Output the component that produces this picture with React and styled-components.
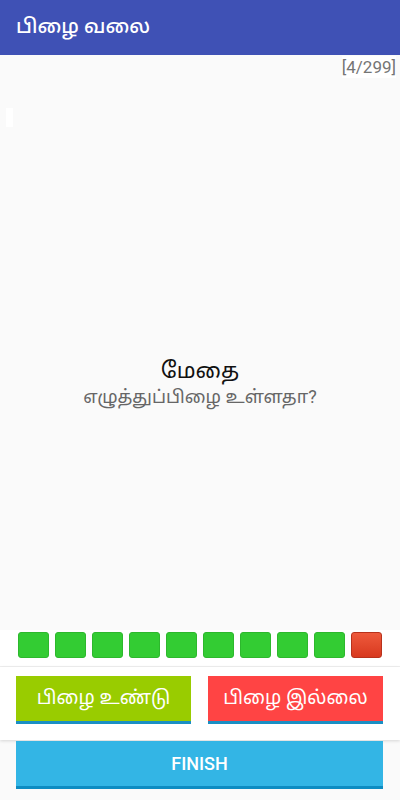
import styled, { createGlobalStyle } from "styled-components";

const GlobalStyle = createGlobalStyle`
    body {
        margin: 0;
        background: #fafafa;
        font-family: Roboto, "Noto Sans", "Noto Sans Tamil", sans-serif;
    }
`

const squares = [1, 1, 1, 1, 1, 1, 1, 1, 1, 0]

const App = () => {
    return <>
    <GlobalStyle />
    <Page>
        <AppBar>பிழை வலை</AppBar>
        <Content>
            <CounterRow>
                <Counter>[4/299]</Counter>
            </CounterRow>
            <Cursor />
            <Question>
                <Word>மேதை</Word>
                <Prompt>எழுத்துப்பிழை உள்ளதா?</Prompt>
            </Question>
        </Content>
        <Progress>
            {squares.map((ok, i) => <Square key={i} $ok={ok} />)}
        </Progress>
        <AnswerCard>
            <AnswerButton $color="#99cc00">பிழை உண்டு</AnswerButton>
            <AnswerButton $color="#ff4444">பிழை இல்லை</AnswerButton>
        </AnswerCard>
        <Footer>
            <FinishButton>FINISH</FinishButton>
        </Footer>
    </Page>
    </>
}

export default App

const Page = styled.div`
    display: flex;
    flex-direction: column;
    height: 800px;
    width: 400px;
    overflow: hidden;
`

const AppBar = styled.div`
    height: 55px;
    flex-shrink: 0;
    display: flex;
    align-items: center;
    padding-left: 16px;
    padding-bottom: 1px;
    box-sizing: border-box;
    background-color: #3f51b5;
    color: #ffffff;
    font-size: 20px;
    font-weight: 500;
`

const Content = styled.div`
    flex: 1;
    display: flex;
    flex-direction: column;
`

const CounterRow = styled.div`
    display: flex;
    justify-content: flex-end;
    padding: 1px 4px 0 0;
`

const Counter = styled.span`
    background: #ffffff;
    color: #757575;
    font-size: 17px;
    line-height: 22px;
`

const Cursor = styled.div`
    width: 7px;
    height: 19px;
    margin: 30px 0 0 6px;
    background: #ffffff;
`

const Question = styled.div`
    flex: 1;
    display: flex;
    flex-direction: column;
    align-items: center;
    justify-content: center;
    padding-top: 8px;
`

const Word = styled.div`
    color: #111111;
    font-size: 22px;
    line-height: 28px;
`

const Prompt = styled.div`
    color: #666666;
    font-size: 18px;
    line-height: 24px;
`

const Progress = styled.div`
    flex-shrink: 0;
    display: flex;
    gap: 6px;
    padding: 2px 18px 8px;
    background: #ffffff;
    border-bottom: 1px solid #f0f0f0;
`

const Square = styled.div`
    width: 31px;
    height: 26px;
    box-sizing: border-box;
    border-radius: 3px;
    border: 1px solid ${p => p.$ok ? "#2db82d" : "#b8321c"};
    background: ${p => p.$ok ? "#33cc33" : "linear-gradient(#ee5a3c, #d8391f)"};
`

const AnswerCard = styled.div`
    flex-shrink: 0;
    display: flex;
    gap: 17px;
    padding: 9px 17px 16px 16px;
    background: #ffffff;
    box-shadow: 0 1px 3px rgba(0, 0, 0, 0.15);
`

const AnswerButton = styled.div`
    flex: 1;
    height: 48px;
    box-sizing: border-box;
    display: flex;
    align-items: center;
    justify-content: center;
    background: ${p => p.$color};
    border-bottom: 3px solid #1a8fc4;
    color: #ffffff;
    font-size: 19px;
`

const Footer = styled.div`
    flex-shrink: 0;
    padding: 1px 17px 11px 16px;
`

const FinishButton = styled.div`
    height: 48px;
    box-sizing: border-box;
    display: flex;
    align-items: center;
    justify-content: center;
    background: #33b5e5;
    border-bottom: 3px solid #0d8cc2;
    color: #ffffff;
    font-size: 18px;
    font-weight: 500;
`
